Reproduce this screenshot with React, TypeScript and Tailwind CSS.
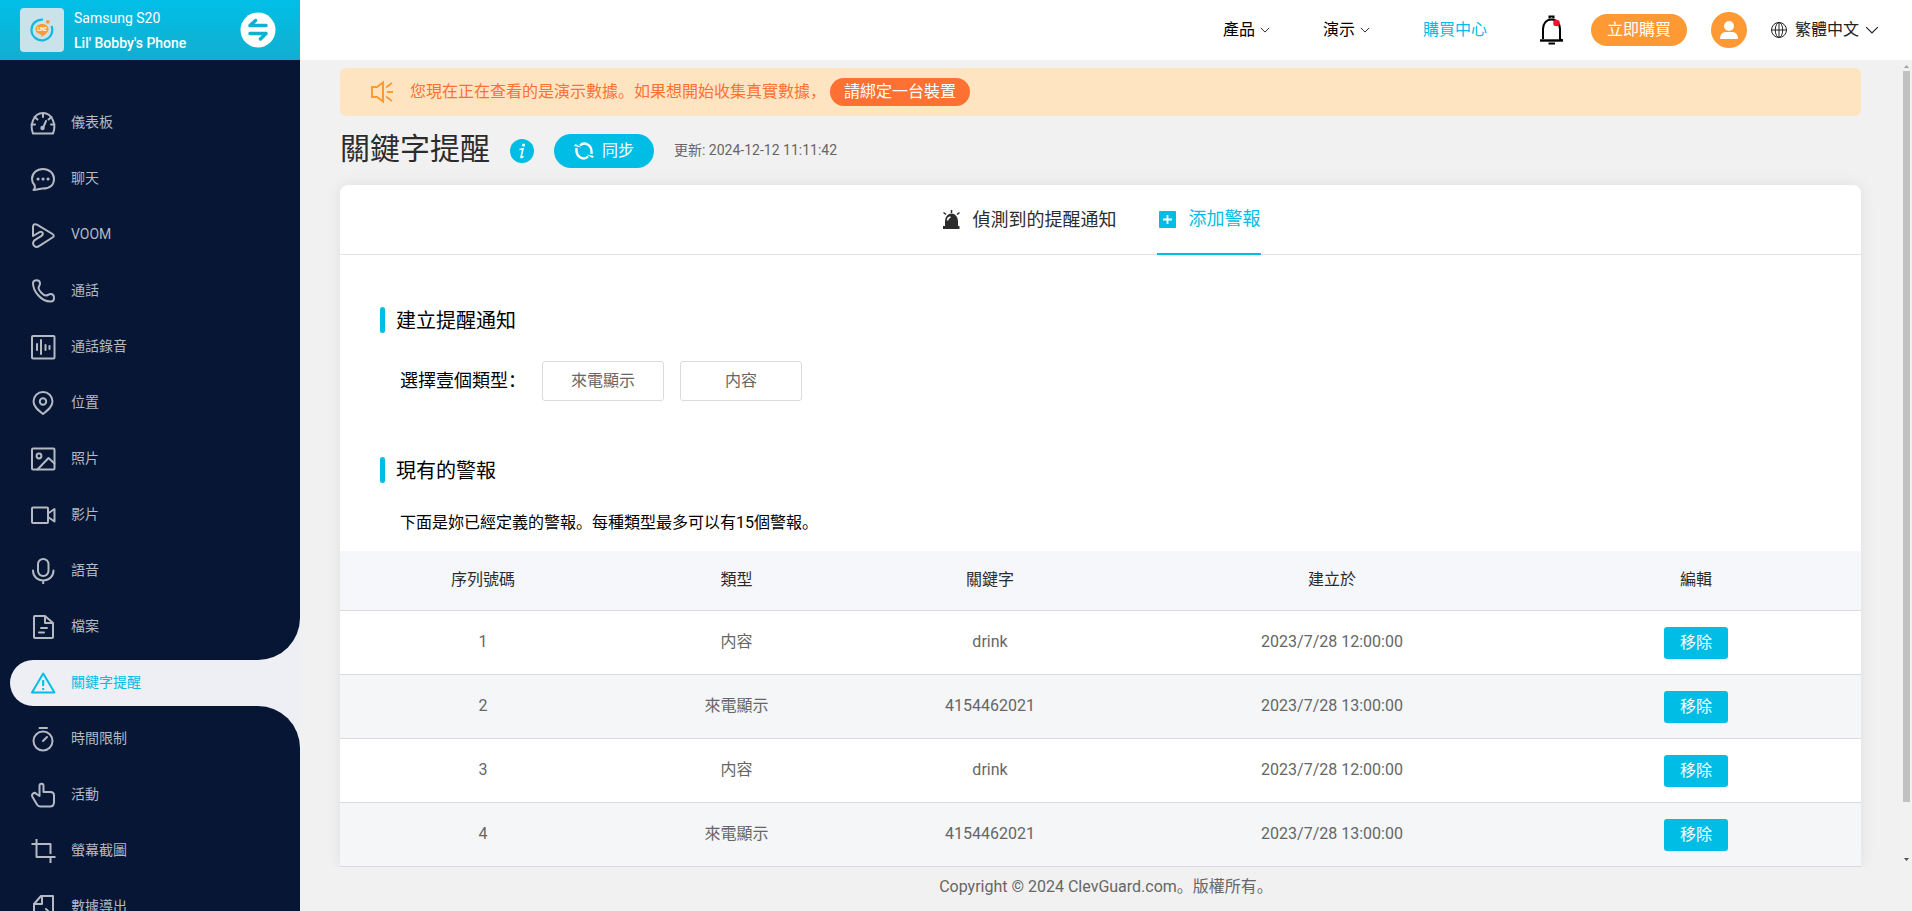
import type { ReactNode } from "react";

type MenuItem = {
    label: string;
    icon: ReactNode;
    active?: boolean;
};

const menu: MenuItem[] = [
    {
        label: "儀表板",
        icon: (
            <>
                <path d="M3 23.500C-.5 15 3.500 3 13 3s13.500 12 10 20.500z" />
                <path d="M13 3v4M1.500 14.500H5M21 14.500h3.500M4.500 7l3 2.500M21.500 7l-3 2.500M13 18l3-7" />
                <circle cx="12.500" cy="18" r="1.200" />
            </>
        ),
    },
    {
        label: "聊天",
        icon: (
            <>
                <path d="M3.500 24c1.800-1.500 1.500-3.500 1-5C2.800 17.200 2 15.300 2 13 2 7.200 6.900 3 13 3s11 4.200 11 10-4 9.500-11 9.500c-3.500 0-6 1.500-9.500 1.500z" />
                <path d="M8 13h.1M13 13h.1M18 13h.1" strokeWidth="3" />
            </>
        ),
    },
    {
        label: "VOOM",
        icon: (
            <path d="M3 14V5c0-2.500 2-3.500 4-2.400L22.500 12c1.700 1 1.700 2.500 0 3.500L9 24.200c-3.500 2.200-7-1.200-5.500-4.500.5-1 1-1.500 2-2.100l6-3.800c2.600-1.700.8-5-1.900-3.700L3 14" />
        ),
    },
    {
        label: "通話",
        icon: (
            <path d="M3 5c0-1.500 1.500-2.800 3.500-2.800S10 3.200 10 5.500c0 1.800-1.500 3-1.500 4.500 0 2.500 5 7.500 7.500 7.500 1.500 0 3-1.500 4.500-1.500 2.300 0 3.500 1.500 3.500 4 0 2-1.200 3.500-3.500 3.500C11 23.500 3 13 3 5z" />
        ),
    },
    {
        label: "通話錄音",
        icon: (
            <>
                <rect x="2" y="2" width="22.500" height="22.500" rx="1" />
                <path d="M7 10v6M11 6v14M15.500 11v5M19.500 12v3" />
            </>
        ),
    },
    {
        label: "位置",
        icon: (
            <>
                <path d="M13 24C8 20 3.500 16.500 3.500 11.500a9.500 9.500 0 0 1 19 0C22.500 16.500 18 20 13 24z" />
                <circle cx="13" cy="11.500" r="3.200" />
            </>
        ),
    },
    {
        label: "照片",
        icon: (
            <>
                <rect x="2" y="2.500" width="22.500" height="21" rx="1" />
                <circle cx="9" cy="10" r="2.400" />
                <path d="M7.500 23.500L18.500 12l6 5.500" />
            </>
        ),
    },
    {
        label: "影片",
        icon: (
            <>
                <rect x="2" y="5.500" width="16" height="15.500" rx="1" />
                <path d="M18 11.500l6.500-4.500v12.500L18 15" />
            </>
        ),
    },
    {
        label: "語音",
        icon: (
            <>
                <rect x="8" y="1" width="10.500" height="17" rx="5.200" />
                <path d="M3 12.500c0 6 4.500 10 10.200 10s10.300-4 10.300-10M13.200 22.500v3.500" />
            </>
        ),
    },
    {
        label: "檔案",
        icon: (
            <>
                <path d="M15 2H5a1 1 0 0 0-1 1v20a1 1 0 0 0 1 1h17a1 1 0 0 0 1-1V9zM15 2v7h8" />
                <path d="M11 14h6M9 18.500h5" />
            </>
        ),
    },
    {
        label: "關鍵字提醒",
        active: true,
        icon: (
            <>
                <path d="M13.200 3.500L24.500 22.500H2z" />
                <path d="M13.200 10v6M13.200 18v2" strokeLinecap="butt" />
            </>
        ),
    },
    {
        label: "時間限制",
        icon: (
            <>
                <circle cx="13" cy="15" r="9.500" />
                <path d="M9.500 2h7.500M13 15l4-4" />
            </>
        ),
    },
    {
        label: "活動",
        icon: (
            <path d="M9.500 14V4c0-3 4-3 4 0v6h7c2.200 0 3.500 1.500 3.500 3.500V20c0 2.500-1.500 4.500-4 4.500h-9.500c-1.500 0-2.500-.5-3.200-1.500L2.500 15c-1.500-3 1.500-5.500 4-3z" />
        ),
    },
    {
        label: "螢幕截圖",
        icon: <path d="M6.500 1v18h19M1.500 6h19v10M20.500 19v6" strokeLinecap="butt" />,
    },
    {
        label: "數據導出",
        icon: (
            <>
                <path d="M11 2h12v21a1 1 0 0 1-1 1H5a1 1 0 0 1-1-1V10z" />
                <path d="M12 2v8H4M16 15l3 3-3 3M11 18h8" />
            </>
        ),
    },
];

const alerts = [
    { id: 1, type: "内容", keyword: "drink", created: "2023/7/28 12:00:00" },
    { id: 2, type: "來電顯示", keyword: "4154462021", created: "2023/7/28 13:00:00" },
    { id: 3, type: "内容", keyword: "drink", created: "2023/7/28 12:00:00" },
    { id: 4, type: "來電顯示", keyword: "4154462021", created: "2023/7/28 13:00:00" },
];

function Chevron({ className }: { className: string }) {
    return (
        <svg className={className} viewBox="0 0 12 12" fill="none" stroke="currentColor" aria-hidden="true">
            <path d="M1 3.500l5 5 5-5" />
        </svg>
    );
}

function DeviceBar() {
    return (
        <div className="flex h-15 shrink-0 items-center bg-linear-to-b from-[#00bfe7] to-[#11aed0] pl-5 text-sm text-white">
            <div className="flex size-11 items-center justify-center rounded bg-[#cae3eb]">
                <svg className="size-6" viewBox="0 0 24 24" aria-hidden="true">
                    <path d="M13 1.600A10.400 10.400 0 1 0 21.500 8" fill="none" stroke="#12b9dd" strokeWidth="2.200" />
                    <circle cx="17.800" cy="3.800" r="1.900" fill="#ff9933" />
                    <path d="M12 6c-4 0-6.500 2.200-6.500 5.300 0 2.700 2.200 4.700 5.700 5.200v2.300c3-1.300 7.300-4.300 7.300-7.500C18.500 8.200 16 6 12 6z" fill="#ff9933" />
                    <text x="12" y="13" textAnchor="middle" fontSize="4.500" fontWeight="700" fill="#fff">LINE</text>
                </svg>
            </div>
            <div className="ml-2.5 flex flex-col gap-[5px]">
                <span className="leading-5">Samsung S20</span>
                <span className="font-medium leading-5">Lil' Bobby's Phone</span>
            </div>
            <button type="button" aria-label="切換裝置" className="mr-6 ml-auto">
                <svg className="size-9" viewBox="0 0 36 36" aria-hidden="true">
                    <circle cx="18" cy="18" r="17.500" fill="#fff" />
                    <path
                        d="M15.500 8.500l-5.500 5h16M20.500 27l5.500-5.500H10"
                        fill="none"
                        stroke="#10b0d3"
                        strokeWidth="3.500"
                        strokeLinecap="round"
                        strokeLinejoin="round"
                    />
                </svg>
            </button>
        </div>
    );
}

function Sidebar() {
    return (
        <aside className="flex h-full w-75 shrink-0 flex-col bg-[#071635]">
            <DeviceBar />
            <nav className="min-h-0 flex-1 overflow-hidden pt-10 pl-2.5">
                <ul className="flex flex-col gap-2.5">
                    {menu.map((item) => (
                        <li key={item.label} className="relative">
                            {item.active && (
                                <>
                                    <span className="absolute right-0 bottom-full size-[42px] bg-[#eeeff4]">
                                        <span className="block size-full rounded-br-[42px] bg-[#071635]" />
                                    </span>
                                    <span className="absolute top-full right-0 size-[42px] bg-[#eeeff4]">
                                        <span className="block size-full rounded-tr-[42px] bg-[#071635]" />
                                    </span>
                                </>
                            )}
                            <a
                                href="#"
                                className={
                                    item.active
                                        ? "flex h-[46px] items-center gap-[15px] rounded-l-full bg-[#eeeff4] pl-5 text-sm text-[#00bde5]"
                                        : "flex h-[46px] items-center gap-[15px] pl-5 text-sm text-[#b4b9c2]"
                                }
                            >
                                <svg
                                    className="size-[26px] shrink-0"
                                    viewBox="0 0 26 26"
                                    fill="none"
                                    stroke="currentColor"
                                    strokeWidth="2"
                                    strokeLinecap="round"
                                    strokeLinejoin="round"
                                    aria-hidden="true"
                                >
                                    {item.icon}
                                </svg>
                                <span className="pb-0.5">{item.label}</span>
                            </a>
                        </li>
                    ))}
                </ul>
            </nav>
        </aside>
    );
}

function TopBar() {
    return (
        <header className="flex h-15 shrink-0 items-center justify-end bg-white pr-[33px] text-base text-black">
            <a href="#" className="flex items-center gap-[5px]">
                產品
                <Chevron className="size-[10px]" />
            </a>
            <a href="#" className="ml-[53px] flex items-center gap-[5px]">
                演示
                <Chevron className="size-[10px]" />
            </a>
            <a href="#" className="ml-[53px] text-[#00bde5]">購買中心</a>
            <button type="button" aria-label="通知" className="ml-[50px]">
                <svg className="h-[30px] w-[30px]" viewBox="0 0 30 30" fill="none" stroke="#000" aria-hidden="true">
                    <path d="M6 24V14c0-5.500 3.500-9.500 8.500-9.500S23 8.500 23 14v10l2.500 1.500" strokeWidth="2" />
                    <path d="M3 25.500h23" strokeWidth="2.400" />
                    <path d="M12.500 3.500V1.500h4v2M11.500 28.500h6.500" strokeWidth="2" />
                    <circle cx="19.500" cy="8" r="3.300" fill="#f5102c" stroke="none" />
                </svg>
            </button>
            <button type="button" className="ml-6 h-8 w-24 rounded-full bg-[#ff9933] text-white">立即購買</button>
            <button type="button" aria-label="帳戶" className="ml-6">
                <svg className="size-9" viewBox="0 0 36 36" fill="#fff" aria-hidden="true">
                    <circle cx="18" cy="18" r="18" fill="#ff9933" />
                    <circle cx="18" cy="14" r="5" />
                    <path d="M9 27c0-4.500 2.500-7 6-7h6c3.500 0 6 2.500 6 7z" />
                </svg>
            </button>
            <button type="button" className="ml-6 flex items-center text-[#222]">
                <svg className="mr-2 size-4" viewBox="0 0 16 16" fill="none" stroke="currentColor" aria-hidden="true">
                    <circle cx="8" cy="8" r="7.500" />
                    <ellipse cx="8" cy="8" rx="3.700" ry="7.500" />
                    <path d="M8 .5v15M.5 8h15" />
                </svg>
                繁體中文
                <Chevron className="ml-1.5 size-[14px]" />
            </button>
        </header>
    );
}

function DemoBanner() {
    return (
        <div className="mt-2 flex h-12 items-center rounded-md bg-[#ffe4c1] pl-[30px]">
            <svg className="mr-4 size-6" viewBox="0 0 24 24" fill="none" stroke="#ff9933" strokeWidth="2" aria-hidden="true">
                <path d="M2 7h5l6-4.500v19L7 17H2zM17 12h6M16 7.500l6-4.500M16 16.500l6 4.500" />
            </svg>
            <span className="text-[#ff7133]">您現在正在查看的是演示數據。如果想開始收集真實數據，</span>
            <button type="button" className="ml-1 h-7 rounded-full bg-[#ff7133] px-[14px] text-white">請綁定一台裝置</button>
        </div>
    );
}

function PageTitle() {
    return (
        <div className="flex h-[69px] items-center">
            <h1 className="pb-1 text-3xl text-[#2c2c2c]">關鍵字提醒</h1>
            <button type="button" aria-label="說明" className="ml-5">
                <svg className="size-6" viewBox="0 0 24 24" aria-hidden="true">
                    <circle cx="12" cy="12" r="12" fill="#00bde5" />
                    <circle cx="13.500" cy="6" r="1.500" fill="#fff" />
                    <path d="M9.500 10.500l3.500-.8-2 8.300c0 1 1.200.6 2.500-.8" fill="none" stroke="#fff" strokeWidth="1.600" />
                </svg>
            </button>
            <button type="button" className="ml-5 flex h-[34px] w-25 items-center justify-center gap-2 rounded-full bg-[#00bde5] text-white">
                <svg className="size-5" viewBox="0 0 20 20" fill="none" stroke="#fff" strokeWidth="2.400" aria-hidden="true">
                    <path d="M6 4.500C10 .5 18.500 3 17.500 13M14 15.500C10 19.500 1.500 17 2.500 7" />
                    <path d="M0 5L1.500 3l6 3.500zM20 15l-1.500 2-6-3.500z" fill="#fff" stroke="none" />
                </svg>
                同步
            </button>
            <span className="ml-5 pb-0.5 text-sm text-[#666]">更新: 2024-12-12 11:11:42</span>
        </div>
    );
}

function Tabs() {
    return (
        <div role="tablist" className="flex h-[70px] justify-center gap-10 border-b border-[#e1e2e4] text-lg">
            <button type="button" role="tab" aria-selected="false" className="flex items-center gap-3 text-[#2c2c2c]">
                <svg className="size-5" viewBox="0 0 20 20" aria-hidden="true">
                    <path d="M4 16v-5a6.500 7.500 0 0 1 13 0v5h1.500v3H2v-3z" fill="#2c2c2c" />
                    <path d="M10.500 0v3M2.500 2.500L5 4.500M18.500 2.500L16 4.500" stroke="#2c2c2c" strokeWidth="1.500" />
                    <path d="M6.500 10.500c.2-2 1.300-3.200 3-3.500" fill="none" stroke="#fff" strokeWidth="1.500" />
                </svg>
                偵測到的提醒通知
            </button>
            <button type="button" role="tab" aria-selected="true" className="-mb-px flex items-center gap-3 border-b-2 border-[#00bde5] text-[#00bde5]">
                <svg className="size-5" viewBox="0 0 20 20" aria-hidden="true">
                    <rect x="2" y="2" width="17" height="17" rx="1" fill="#00bde5" />
                    <path d="M10.500 6v9M6 10.500h9" stroke="#fff" strokeWidth="1.800" />
                </svg>
                添加警報
            </button>
        </div>
    );
}

function SectionTitle({ children }: { children: ReactNode }) {
    return (
        <h2 className="flex h-7 items-center gap-[11px] pl-10 text-xl text-black">
            <span className="h-[26px] w-[5px] rounded-sm bg-[#00bde5]" />
            <span className="pt-0.5">{children}</span>
        </h2>
    );
}

function AlertTable() {
    return (
        <table className="w-full table-fixed border-collapse text-center text-base text-[#666]">
            <colgroup>
                <col className="w-[286px]" />
                <col className="w-[221px]" />
                <col className="w-[286px]" />
                <col />
                <col className="w-[330px]" />
            </colgroup>
            <thead>
                <tr className="h-[59px] border-b border-[#dadbde] bg-[#f5f7fb] text-[#2c2c2c]">
                    <th className="font-normal">序列號碼</th>
                    <th className="font-normal">類型</th>
                    <th className="font-normal">關鍵字</th>
                    <th className="font-normal">建立於</th>
                    <th className="font-normal">編輯</th>
                </tr>
            </thead>
            <tbody>
                {alerts.map((alert) => (
                    <tr key={alert.id} className="h-16 border-b border-[#dadbde] bg-white even:bg-[#f4f6f8]">
                        <td>{alert.id}</td>
                        <td>{alert.type}</td>
                        <td>{alert.keyword}</td>
                        <td>{alert.created}</td>
                        <td className="pt-0.5">
                            <button type="button" className="h-8 w-16 rounded-[3px] bg-[#00bde5] text-white">移除</button>
                        </td>
                    </tr>
                ))}
            </tbody>
        </table>
    );
}

function ScrollRail() {
    return (
        <div className="flex w-[11px] shrink-0 flex-col items-center pt-1 pb-1" aria-hidden="true">
            <svg className="h-[6px] w-[7px]" viewBox="0 0 7 6"><path d="M1 4l2.500-3L6 4z" fill="#a3a3a3" /></svg>
            <span className="mt-px w-[7px] grow-[93] bg-[#c1c1c1]" />
            <span className="grow-7" />
            <svg className="h-[6px] w-[7px]" viewBox="0 0 7 6"><path d="M1 1l2.500 3L6 1z" fill="#505050" /></svg>
        </div>
    );
}

export default function App() {
    return (
        <div className="flex h-screen overflow-hidden bg-[#f1f1f1] font-[Roboto,'Noto_Sans_CJK_SC',sans-serif]">
            <Sidebar />
            <div className="flex min-w-0 flex-1 flex-col">
                <TopBar />
                <div className="flex min-h-0 flex-1">
                    <main className="min-w-0 flex-1 overflow-hidden px-10">
                        <DemoBanner />
                        <PageTitle />
                        <section className="rounded-t-lg bg-white shadow-[0_0_16px_rgba(0,0,0,0.08)]">
                            <Tabs />
                            <div className="flex flex-col pt-[51px]">
                                <SectionTitle>建立提醒通知</SectionTitle>
                                <div className="mt-[27px] flex items-center gap-4 pl-15">
                                    <span className="text-lg text-black">選擇壹個類型：</span>
                                    <button type="button" className="h-10 w-[122px] rounded-[3px] border border-[#dcdcdc] text-[#666]">來電顯示</button>
                                    <button type="button" className="h-10 w-[122px] rounded-[3px] border border-[#dcdcdc] text-[#666]">内容</button>
                                </div>
                                <div className="mt-[55px]">
                                    <SectionTitle>現有的警報</SectionTitle>
                                </div>
                                <p className="mt-[27px] mb-4 pl-15 leading-6 text-black">下面是妳已經定義的警報。每種類型最多可以有15個警報。</p>
                                <AlertTable />
                            </div>
                        </section>
                    </main>
                    <ScrollRail />
                </div>
                <footer className="flex h-11 shrink-0 items-center justify-center pb-1 text-base text-[#666]">
                    Copyright © 2024 ClevGuard.com。版權所有。
                </footer>
            </div>
        </div>
    );
}
